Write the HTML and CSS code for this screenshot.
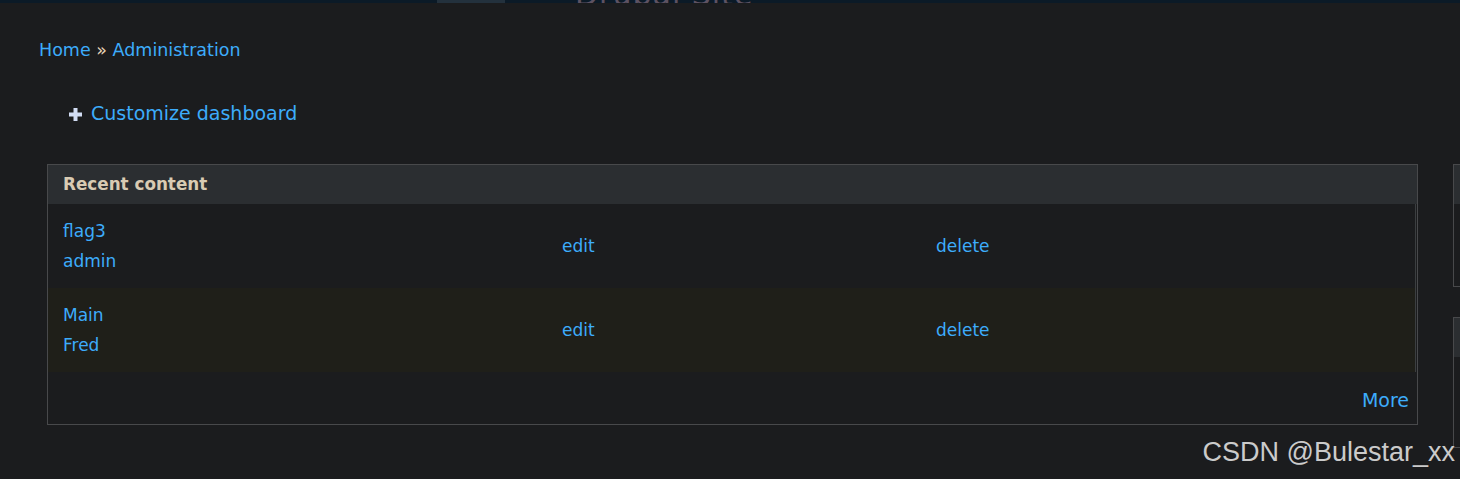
FILE: index.html
```html
<!DOCTYPE html>
<html lang="en">
<head>
<meta charset="utf-8">
<title>Dashboard | Drupal Site</title>
<link rel="stylesheet" href="styles.css">
</head>
<body>
<header class="site-header">
  <div class="logo"></div>
  <span class="site-name" aria-hidden="true">Drupal Site</span>
</header>
<main class="page">
  <nav class="breadcrumb"><a href="#">Home</a> <span class="sep">»</span> <a href="#">Administration</a></nav>
  <div class="customize">
    <svg class="plus" width="13" height="13" viewBox="0 0 13 13" aria-hidden="true"><path d="M4.5 0h4v4.5H13v4H8.5V13h-4V8.5H0v-4h4.5z" fill="#d2ddf4"/></svg>
    <a href="#">Customize dashboard</a>
  </div>
  <div class="dashboard">
    <div class="col-main">
      <section class="panel">
        <h2 class="panel-title">Recent content</h2>
        <div class="rows">
          <div class="row">
            <div class="cell-title"><a href="#" class="line">flag3</a><a href="#" class="line">admin</a></div>
            <div class="cell-op"><a href="#">edit</a></div>
            <div class="cell-op"><a href="#">delete</a></div>
          </div>
          <div class="row even">
            <div class="cell-title"><a href="#" class="line">Main</a><a href="#" class="line">Fred</a></div>
            <div class="cell-op"><a href="#">edit</a></div>
            <div class="cell-op"><a href="#">delete</a></div>
          </div>
        </div>
        <div class="panel-footer"><a href="#">More</a></div>
      </section>
    </div>
    <div class="col-side">
      <section class="panel side-a"><h2 class="panel-title">&nbsp;</h2></section>
      <section class="panel side-b"><h2 class="panel-title">&nbsp;</h2></section>
    </div>
  </div>
</main>
<div class="watermark">CSDN @Bulestar_xx</div>
</body>
</html>
```
FILE: styles.css
```css
html, body {
  margin: 0;
  padding: 0;
}
body {
  background: #1b1c1e;
  font-family: "DejaVu Sans", "Liberation Sans", sans-serif;
  color: #d8c9b0;
  overflow: hidden;
  width: 1460px;
  height: 479px;
  position: relative;
}
a {
  color: #3dacfb;
  text-decoration: none;
}
.site-header {
  height: 3px;
  overflow: hidden;
  background: #0b1a27;
  display: flex;
  align-items: flex-end;
  padding-left: 437px;
}
.logo {
  width: 68px;
  height: 40px;
  background: #23313d;
  flex: none;
}
.site-name {
  display: block;
  margin-left: 70px;
  font-size: 30px;
  line-height: 30px;
  margin-bottom: -7px;
  color: #5d5262;
  letter-spacing: 1px;
}
.page {
  padding: 0 0 0 47px;
}
.breadcrumb {
  margin: 37px 0 0 -8px;
  font-size: 17.5px;
  line-height: 20px;
  height: 20px;
}
.breadcrumb .sep {
  color: #e6d3b8;
}
.customize {
  margin: 42px 0 0 22px;
  display: flex;
  align-items: center;
  gap: 9px;
  font-size: 19px;
  line-height: 22px;
  height: 22px;
}
.plus {
  display: block;
  margin-top: 3px;
}
.dashboard {
  margin-top: 40px;
  display: flex;
  gap: 35px;
  align-items: flex-start;
}
.col-main {
  width: 1371px;
  flex: none;
}
.col-side {
  width: 400px;
  flex: none;
  display: flex;
  flex-direction: column;
  gap: 30px;
}
.panel {
  border: 1px solid #48494b;
  background: #1b1c1e;
}
.panel-title {
  margin: 0;
  background: #2b2e31;
  height: 39px;
  line-height: 38px;
  padding: 0 15px;
  font-size: 16.8px;
  font-weight: bold;
  color: #d9cbb3;
}
.rows {
  border-right: 1px solid #3b3e40;
  margin-right: 1px;
}
.row {
  display: grid;
  grid-template-columns: 499px 374px 1fr;
  align-items: center;
  height: 84px;
  font-size: 17px;
}
.row.even {
  background: #1f1f19;
}
.cell-title {
  padding-left: 15px;
  display: flex;
  flex-direction: column;
}
.line {
  display: block;
  line-height: 30px;
}
.cell-op {
  padding-left: 15px;
}
.panel-footer {
  text-align: right;
  padding: 17px 8px 13px;
  font-size: 19px;
  line-height: 22px;
}
.side-a {
  height: 121px;
}
.side-b {
  height: 129px;
}
.watermark {
  position: absolute;
  right: 5px;
  top: 434px;
  font-family: "Liberation Sans", "Noto Sans", sans-serif;
  font-size: 27px;
  line-height: 36px;
  color: #cbcbcb;
}
```
